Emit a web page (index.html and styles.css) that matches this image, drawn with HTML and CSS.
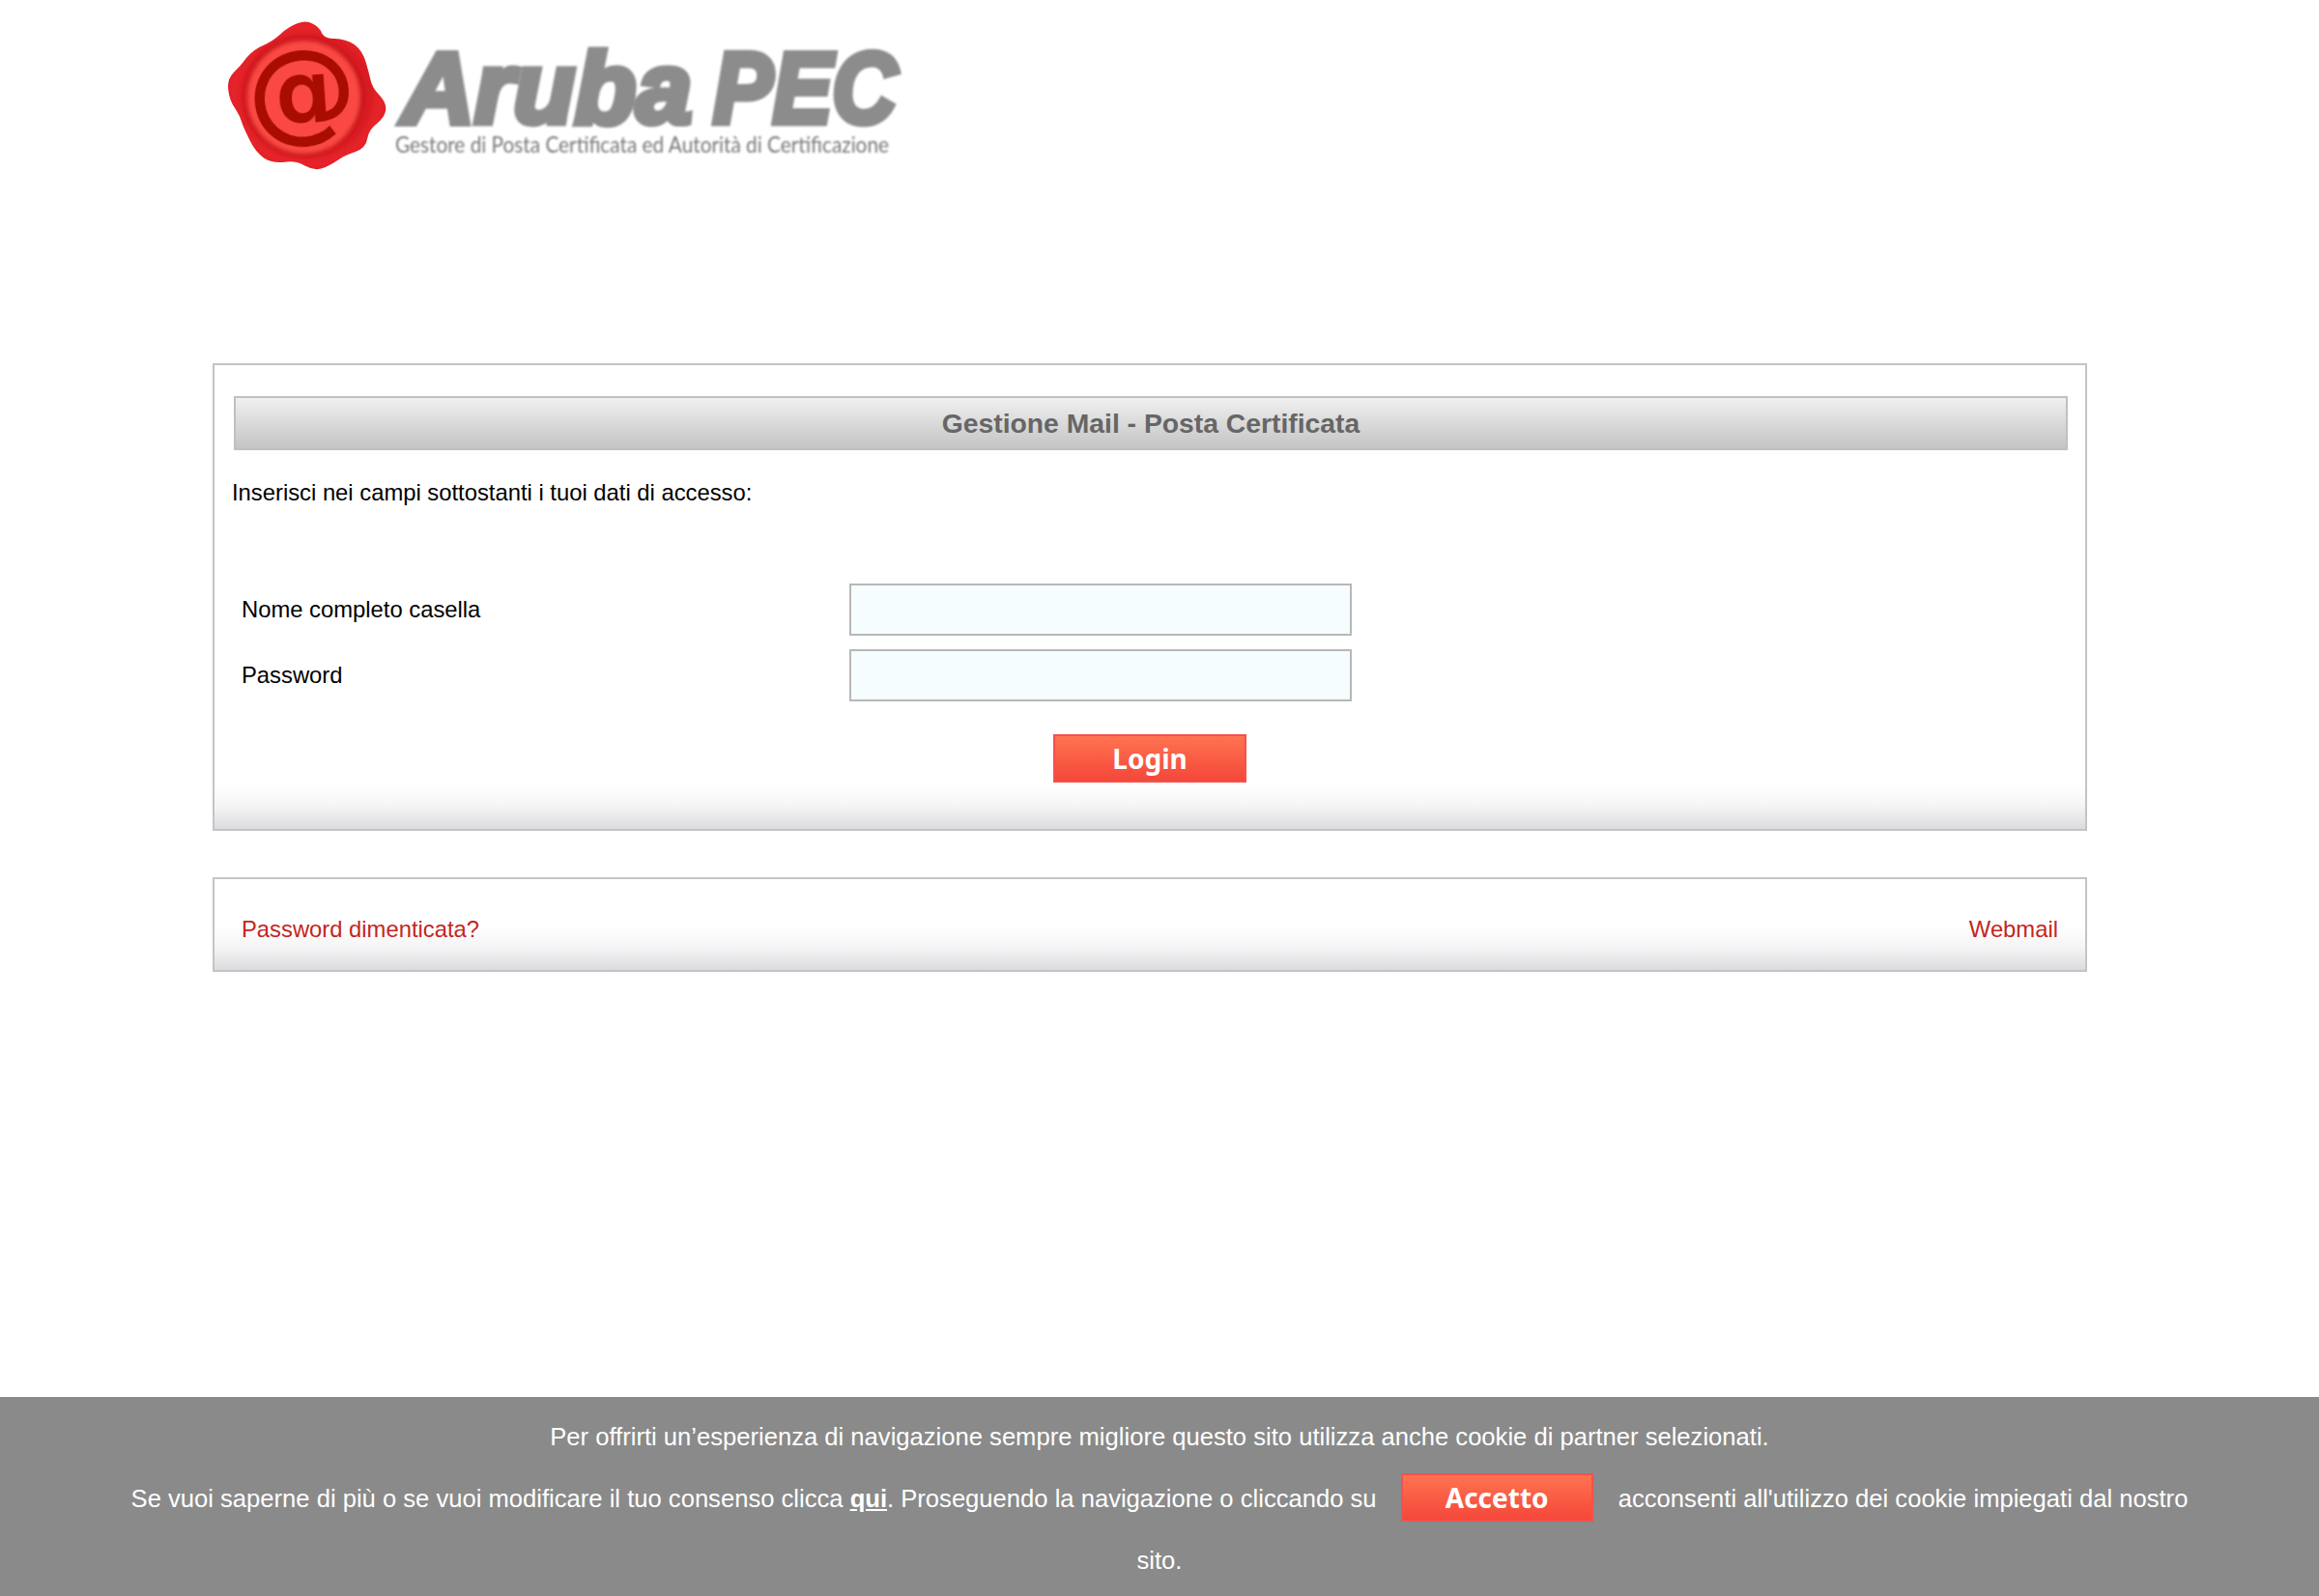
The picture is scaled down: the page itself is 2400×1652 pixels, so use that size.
FILE: index.html
```html
<!DOCTYPE html>
<html lang="it">
<head>
<meta charset="utf-8">
<title>Gestione Mail - Posta Certificata</title>
<link rel="stylesheet" href="styles.css">
</head>
<body>
<header class="header">
  <svg class="logo" width="760" height="190" viewBox="0 0 760 190" role="img" aria-label="Aruba PEC">
    <defs>
      <filter id="soft" x="-5%" y="-5%" width="110%" height="110%"><feGaussianBlur stdDeviation="0.8"/></filter>
      <filter id="softer" x="-20%" y="-20%" width="140%" height="140%"><feGaussianBlur stdDeviation="6"/></filter>
      <radialGradient id="waxBase" cx="50%" cy="50%" r="55%">
        <stop offset="0.6" stop-color="#c8161c"/>
        <stop offset="0.85" stop-color="#e8242a"/>
        <stop offset="1" stop-color="#d01a1e"/>
      </radialGradient>
    </defs>
    <g transform="translate(10 10) scale(0.3333)">
      <path class="wax" d="M265 42 Q290 32 312 44 Q334 56 340 74 Q348 90 380 90 Q414 92 440 108 Q466 128 476 163 Q486 198 491 220 Q496 243 516 263 Q538 285 538 307 Q538 332 510 354 Q486 372 481 399 Q476 430 444 441 Q414 451 396 463 Q378 476 349 490 Q320 503 288 485 Q258 468 225 473 Q188 478 160 461 Q134 444 114 403 Q94 362 89 345 Q84 328 69 305 Q52 282 49 250 Q44 218 65 196 Q86 176 105 150 Q126 124 157 111 Q186 99 211 76 Q236 52 265 42Z" fill="url(#waxBase)" filter="url(#soft)"/>
      <circle class="wax-rim" cx="283" cy="272" r="182" filter="url(#softer)"/>
      <circle class="wax-disc" cx="283" cy="272" r="176" filter="url(#softer)"/>
      <text class="wax-at" x="278" y="366" text-anchor="middle" transform="rotate(-4 285 272)" filter="url(#soft)">@</text>
    </g>
    <g filter="url(#soft)">
      <text class="logo-name" x="206" y="127" textLength="300" lengthAdjust="spacingAndGlyphs">Aruba</text>
      <text class="logo-name" x="528" y="127" textLength="190" lengthAdjust="spacingAndGlyphs">PEC</text>
      <text class="logo-tag" x="199" y="158" textLength="511" lengthAdjust="spacingAndGlyphs">Gestore di Posta Certificata ed Autorità di Certificazione</text>
    </g>
  </svg>
</header>
<main class="main">
  <section class="panel panel-login">
    <h1 class="panel-title">Gestione Mail - Posta Certificata</h1>
    <p class="intro">Inserisci nei campi sottostanti i tuoi dati di accesso:</p>
    <form class="login-form">
      <label class="field-label" for="user">Nome completo casella</label>
      <input class="field-input" id="user" type="text">
      <label class="field-label" for="pass">Password</label>
      <input class="field-input" id="pass" type="password">
      <div class="form-actions"><button class="btn btn-login" type="button">Login</button></div>
    </form>
  </section>
  <nav class="panel panel-links">
    <a class="link" href="#">Password dimenticata?</a>
    <a class="link" href="#">Webmail</a>
  </nav>
</main>
<aside class="cookie-bar">
  <p class="cookie-text">Per offrirti un’esperienza di navigazione sempre migliore questo sito utilizza anche cookie di partner selezionati.</p>
  <p class="cookie-text">Se vuoi saperne di più o se vuoi modificare il tuo consenso clicca <a class="cookie-link" href="#">qui</a>. Proseguendo la navigazione o cliccando su <button class="btn btn-accept" type="button">Accetto</button> acconsenti all'utilizzo dei cookie impiegati dal nostro sito.</p>
</aside>
</body>
</html>
```
FILE: styles.css
```css
* { box-sizing: border-box; }
html, body { margin: 0; padding: 0; background: #fff; }
body { font-family: "Liberation Sans", Arial, sans-serif; font-size: 23.8px; color: #000; height: 1652px; overflow: hidden; }

.header { height: 190px; padding-left: 210px; }
.logo { display: block; }
.wax-rim { fill: #c4161a; }
.wax-disc { fill: #fa4a42; }
.wax-at { font-family: "DejaVu Sans", sans-serif; font-weight: 700; font-size: 340px; fill: #a81000; }
.logo-name { font-family: "Liberation Sans", sans-serif; font-weight: 700; font-style: italic; font-size: 104px; fill: #8c8c8c; stroke: #8c8c8c; stroke-width: 7px; }
.logo-tag { font-family: "Lato", sans-serif; font-size: 23px; fill: #777; }

.main { margin: 186px 0 0 220px; width: 1940px; display: flex; flex-direction: column; gap: 48px; }
.panel { border: 2px solid #c4c4c4; background: linear-gradient(to top, #dcdce0 0, #f5f5f6 24px, #fff 46px); }
.panel-login { height: 484px; padding: 32px 18px 0 20px; }
.panel-title { margin: 0; height: 56px; border: 2px solid #c0c0c0; background: linear-gradient(#f0f0f0, #c4c4c4); color: #666; font-size: 28.3px; font-weight: 700; line-height: 53px; text-align: center; }
.intro { margin: 30px 0 0 -2px; line-height: 28px; }
.login-form { display: grid; grid-template-columns: 629px 1fr; row-gap: 14px; align-items: center; margin: 80px 0 0 8px; }
.field-label { line-height: 28px; }
.field-input { display: block; width: 520px; height: 54px; border: 2px solid #b8b8b8; background: #f5fdff; padding: 0 8px; font: inherit; border-radius: 0; outline: none; }
.form-actions { grid-column: 1 / -1; display: flex; justify-content: center; margin: 20px 0 0 -10px; }
.btn { border: 2px solid #f7504a; background: linear-gradient(#ff7350, #f4473a); color: #fff; font-family: "Noto Sans", sans-serif; font-weight: 700; padding: 0; border-radius: 0; }
.btn-login { width: 200px; height: 50px; font-size: 28px; }
.panel-links { height: 98px; padding: 38px 28px 0 28px; display: flex; justify-content: space-between; align-items: flex-start; }
.link { color: #c4261f; text-decoration: none; line-height: 28px; }

.cookie-bar { position: fixed; left: 0; right: 0; bottom: 0; height: 206px; padding: 9px 130px 0; background: #8a8a8a; color: #fff; text-align: center; font-size: 25.6px; line-height: 64px; }
.cookie-text { margin: 0; }
.cookie-link { color: #fff; font-weight: 700; text-decoration: underline; }
.btn-accept { width: 199px; height: 50px; margin: 0 19px 6px 18px; font-size: 28px; vertical-align: middle; }
```
